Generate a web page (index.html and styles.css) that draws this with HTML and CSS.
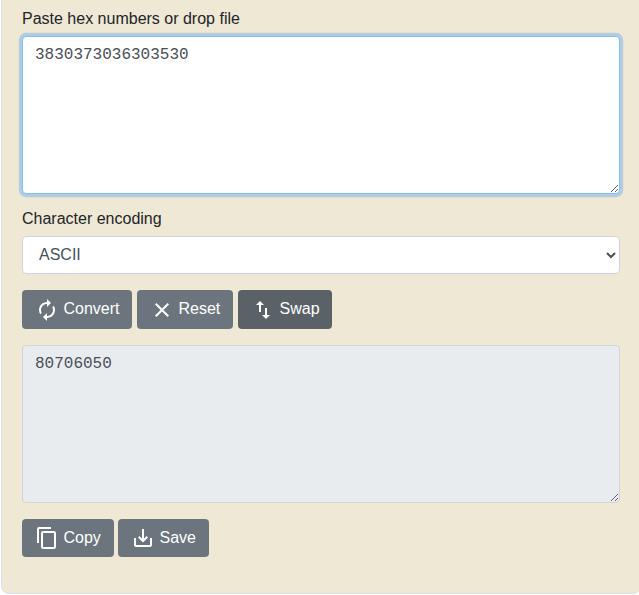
FILE: index.html
```
<!DOCTYPE html>
<html lang="en">
<head>
<meta charset="utf-8">
<title>Hex to ASCII</title>
<link rel="stylesheet" href="styles.css">
</head>
<body>
<form class="card">
  <div class="group">
    <label for="source">Paste hex numbers or drop file</label>
    <textarea id="source" class="control focused" rows="6" spellcheck="false">3830373036303530</textarea>
  </div>
  <div class="group">
    <label for="encoding">Character encoding</label>
    <select id="encoding" class="control select"><option>ASCII</option></select>
  </div>
  <div class="buttons main-buttons">
    <button type="button" class="btn convert"><svg class="icon" viewBox="0 0 24 24"><path d="M12 6v3l4-4-4-4v3c-4.42 0-8 3.58-8 8 0 1.57.46 3.03 1.24 4.26L6.7 14.8A5.87 5.87 0 0 1 6 12c0-3.31 2.69-6 6-6zm6.76 1.74L17.3 9.2c.44.84.7 1.79.7 2.8 0 3.31-2.69 6-6 6v-3l-4 4 4 4v-3c4.42 0 8-3.58 8-8 0-1.57-.46-3.03-1.24-4.26z"/></svg><span>Convert</span></button>
    <button type="button" class="btn reset"><svg class="icon" viewBox="0 0 24 24"><path d="M19 6.41 17.59 5 12 10.59 6.41 5 5 6.41 10.59 12 5 17.59 6.41 19 12 13.41 17.59 19 19 17.59 13.41 12z"/></svg><span>Reset</span></button>
    <button type="button" class="btn swap active"><svg class="icon" viewBox="0 0 24 24"><path d="M16 17.01V10h-2v7.01h-3L15 21l4-3.99h-3zM9 3 5 6.99h3V14h2V6.99h3L9 3z"/></svg><span>Swap</span></button>
  </div>
  <textarea class="control output" rows="6" readonly>80706050</textarea>
  <div class="buttons">
    <button type="button" class="btn copy"><svg class="icon" viewBox="0 0 24 24"><path d="M16 1H4c-1.1 0-2 .9-2 2v14h2V3h12V1zm3 4H8c-1.1 0-2 .9-2 2v14c0 1.1.9 2 2 2h11c1.1 0 2-.9 2-2V7c0-1.1-.9-2-2-2zm0 16H8V7h11v14z"/></svg><span>Copy</span></button>
    <button type="button" class="btn save"><svg class="icon" viewBox="0 0 24 24"><path d="M19 12v7H5v-7H3v7c0 1.1.9 2 2 2h14c1.1 0 2-.9 2-2v-7h-2zm-6 .67 2.59-2.58L17 11.5l-5 5-5-5 1.41-1.41L11 12.67V3h2z"/></svg><span>Save</span></button>
  </div>
</form>
</body>
</html>
```
FILE: styles.css
```
* { box-sizing: border-box; }
html { overflow: hidden; }
body {
  margin: 0;
  background: #fff;
  color: #212529;
  font: 16px/24px "Liberation Sans", Arial, sans-serif;
}
.card {
  width: 640px;
  height: 604px;
  margin: -10px 0 0 1px;
  padding: 16px 20px 20px;
  border: 1px solid #dfdfdf;
  border-radius: 8px;
  background: #efe8d5;
}
.group { margin-bottom: 13px; }
label { display: block; margin-bottom: 5px; }
.control {
  display: block;
  width: 598px;
  margin: 0;
  padding: 6px 12px;
  border: 1px solid #ced4da;
  border-radius: 4px;
  outline: 0;
  background: #fff;
  color: #495057;
  font: inherit;
}
textarea.control {
  height: 158px;
  font-family: "Liberation Mono", monospace;
  resize: vertical;
}
.focused {
  border-color: #80bdff;
  box-shadow: 0 0 0 3.2px rgba(0, 123, 255, .25);
}
.select { height: 38px; padding: 5px 12px 7px; }
.output { background: #e9ecef; }
.buttons { display: flex; gap: 4px; margin: 16px 0; }
.main-buttons { gap: 5px; }
.btn {
  display: flex;
  align-items: center;
  height: 38px;
  padding: 0 12px 0 13px;
  border: 0;
  border-radius: 4px;
  background: #6c757d;
  color: #fff;
  font: inherit;
}
.main-buttons .btn { height: 39px; }
.main-buttons span { position: relative; top: -1px; }
.active { background: #5a6268; }
.convert { width: 110px; }
.reset { width: 96px; }
.swap { width: 94px; }
.copy { width: 92px; }
.save { width: 91px; }
.icon { flex: none; width: 24px; height: 24px; margin-right: 4.5px; fill: currentColor; }
```
